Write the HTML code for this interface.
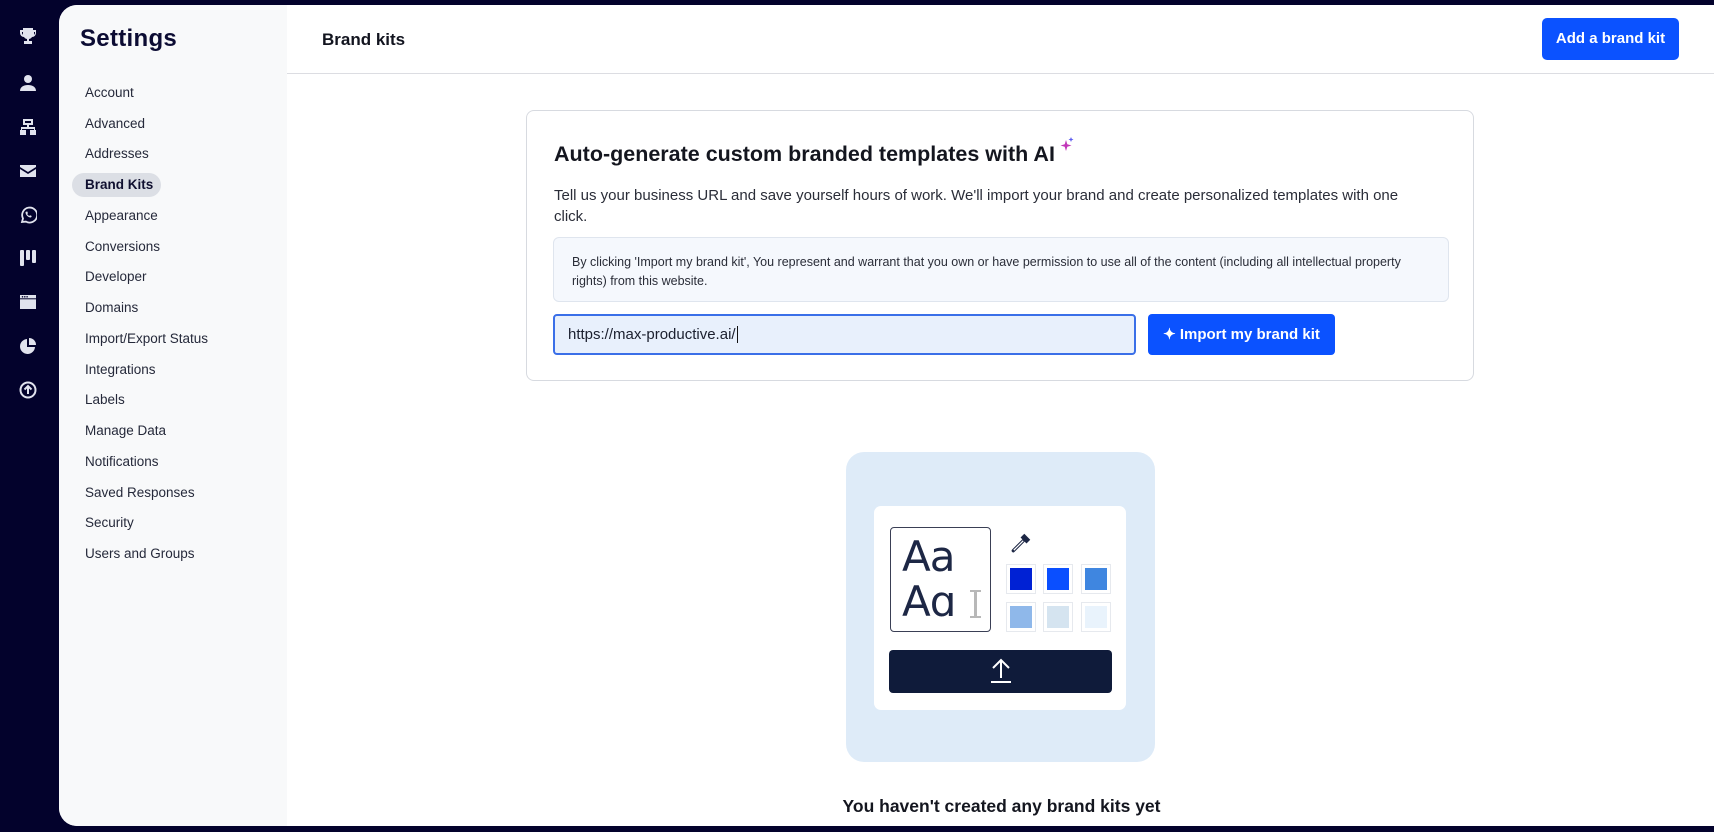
<!DOCTYPE html>
<html><head><meta charset="utf-8"><style>
*{box-sizing:border-box;margin:0;padding:0}
body{width:1714px;height:832px;background:#03022c;font-family:"Liberation Sans",sans-serif;position:relative;overflow:hidden;color:#1b1f2e}
.ic{position:absolute;left:19px;width:18px;height:18px}
.panel{position:absolute;left:59px;top:5px;width:1655px;height:821px;background:#fff;border-radius:18px 0 0 18px;overflow:hidden}
.side{position:absolute;left:0;top:0;width:228px;height:100%;background:#f8f9fa}
.side h1{position:absolute;left:21px;top:20px;font-size:24px;font-weight:bold;color:#0c0c33;letter-spacing:.3px}
.side .it{position:absolute;left:26px;font-size:13.5px;color:#25293a}
.pill{position:absolute;left:13px;top:168px;width:89px;height:24px;border-radius:12px;background:#dcdfe5}
.hdr{position:absolute;left:228px;top:0;right:0;height:69px;border-bottom:1px solid #dcdde2}
.abs{position:absolute}
.sw{position:absolute;width:30px;height:30px;border:1px solid #e6e9ee;padding:3px;background:#fff}
.sw div{width:100%;height:100%}
</style></head><body>
<svg class="ic" style="top:27px" viewBox="0 0 18 18" fill="#e1e3ee"><path d="M4 1h10v2h3v3a4 4 0 0 1-4 4 4 4 0 0 1-3 2v2h3v3H5v-3h3v-2a4 4 0 0 1-3-2 4 4 0 0 1-4-4V3h3zM3 5v1a2 2 0 0 0 1 1.7V5zm12 0v2.7A2 2 0 0 0 16 6V5z"/></svg>
<svg class="ic" style="top:74px" viewBox="0 0 18 18" fill="#e1e3ee"><circle cx="9" cy="5" r="4"/><path d="M1 17c0-4 3.5-6 8-6s8 2 8 6z"/></svg>
<svg class="ic" style="top:118px" viewBox="0 0 18 18" fill="#e1e3ee"><path d="M4 1h10v6H10v2h6v3h1v5h-6v-5h4v-1H3v1h4v5H1v-5h1V9h6V7H4zm2 2v2h6V3z"/></svg>
<svg class="ic" style="top:162px" viewBox="0 0 18 18" fill="#e1e3ee"><path d="M1 3h16v2L9 10 1 5zM1 7l8 5 8-5v8H1z"/></svg>
<svg class="ic" style="top:206px" viewBox="0 0 18 18" fill="none" stroke="#e1e3ee" stroke-width="1.8"><path d="M3 16l1-3.5A7.5 7.5 0 1 1 7 15.6z"/><path d="M6.5 6c0 3 2.5 5.5 5.5 5.5l.8-1.5-1.8-.8-.8.8a4 4 0 0 1-2-2l.8-.8-.8-1.8z" fill="#e1e3ee" stroke="none"/></svg>
<svg class="ic" style="top:249px" viewBox="0 0 18 18" fill="#e1e3ee"><rect x="1" y="1" width="4" height="16" rx="1"/><rect x="7" y="1" width="4" height="10" rx="1"/><rect x="13" y="1" width="4" height="13" rx="1"/></svg>
<svg class="ic" style="top:293px" viewBox="0 0 18 18" fill="#e1e3ee"><rect x="1" y="2" width="16" height="14"/><circle cx="3.5" cy="3.8" r=".8" fill="#03022c"/><circle cx="5.8" cy="3.8" r=".8" fill="#03022c"/><circle cx="8.1" cy="3.8" r=".8" fill="#03022c"/><rect x="1" y="5.3" width="16" height="1" fill="#03022c"/></svg>
<svg class="ic" style="top:337px" viewBox="0 0 18 18" fill="#e1e3ee"><path d="M8 2a7.5 7.5 0 1 0 8 8H8z"/><path d="M10 1v7h7a7 7 0 0 0-7-7z"/></svg>
<svg class="ic" style="top:381px" viewBox="0 0 18 18" fill="none" stroke="#e1e3ee" stroke-width="2"><circle cx="9" cy="9" r="7.5"/><path d="M9 13V5M5.5 8.5L9 5l3.5 3.5"/></svg>

<div class="panel">
 <div class="side">
  <h1>Settings</h1>
  <div class="pill"></div>
  <div class="it" style="top:80px">Account</div>
  <div class="it" style="top:111px">Advanced</div>
  <div class="it" style="top:141px">Addresses</div>
  <div class="it" style="top:172px;font-weight:bold;color:#101030">Brand Kits</div>
  <div class="it" style="top:203px">Appearance</div>
  <div class="it" style="top:234px">Conversions</div>
  <div class="it" style="top:264px">Developer</div>
  <div class="it" style="top:295px">Domains</div>
  <div class="it" style="top:326px">Import/Export Status</div>
  <div class="it" style="top:357px">Integrations</div>
  <div class="it" style="top:387px">Labels</div>
  <div class="it" style="top:418px">Manage Data</div>
  <div class="it" style="top:449px">Notifications</div>
  <div class="it" style="top:480px">Saved Responses</div>
  <div class="it" style="top:510px">Security</div>
  <div class="it" style="top:541px">Users and Groups</div>
 </div>
 <div class="hdr">
  <div class="abs" style="left:35px;top:25px;font-size:17px;font-weight:bold;color:#12141f">Brand kits</div>
  <div class="abs" style="left:1255px;top:13px;width:137px;height:42px;background:#0b52ff;border-radius:5px;color:#fff;font-weight:bold;font-size:15px;text-align:center;line-height:42px">Add a brand kit</div>
 </div>
 <div class="abs" style="left:467px;top:105px;width:948px;height:271px;border:1px solid #d7dae0;border-radius:8px">
  <div class="abs" style="left:27px;top:31px;font-size:21.5px;font-weight:bold;color:#14161f">Auto-generate custom branded templates with AI</div>
  <svg class="abs" style="left:533px;top:26px" width="14" height="16" viewBox="0 0 14 16"><path d="M6 3 7.3 7.2 11.5 8.5 7.3 9.8 6 14 4.7 9.8.5 8.5 4.7 7.2z" fill="#c237b8"/><path d="M11 0l.7 1.8L13.5 2.5l-1.8.7L11 5l-.7-1.8L8.5 2.5l1.8-.7z" fill="#5b5bf0"/></svg>
  <div class="abs" style="left:27px;top:74px;width:860px;font-size:15px;line-height:21px;color:#2a2d38">Tell us your business URL and save yourself hours of work. We'll import your brand and create personalized templates with one click.</div>
  <div class="abs" style="left:26px;top:126px;width:896px;height:65px;background:#f5f8fd;border:1px solid #dfe5ee;border-radius:6px;padding:15px 18px 0;font-size:12.5px;line-height:19px;color:#2a2d38">By clicking 'Import my brand kit', You represent and warrant that you own or have permission to use all of the content (including all intellectual property rights) from this website.</div>
  <div class="abs" style="left:26px;top:203px;width:583px;height:41px;background:#e8f0fc;border:2px solid #3a6fe8;border-radius:4px;padding-left:13px;line-height:37px;font-size:15px;color:#1b1f2e">https://max-productive.ai/<span style="border-left:1px solid #111;margin-left:1px"></span></div>
  <div class="abs" style="left:621px;top:203px;width:187px;height:41px;background:#0b52ff;border-radius:4px;color:#fff;font-weight:bold;font-size:15px;line-height:41px;text-align:center">✦ Import my brand kit</div>
 </div>
 <div class="abs" style="left:787px;top:447px;width:309px;height:310px;background:#deebf8;border-radius:18px">
  <div class="abs" style="left:28px;top:54px;width:252px;height:204px;background:#fff;border-radius:7px"></div>
  <div class="abs" style="left:44px;top:75px;width:101px;height:105px;border:1.5px solid #3a3f55;border-radius:4px;background:#fff"></div>
  <div class="abs" style="left:56px;top:82px;font-size:42px;line-height:45px;color:#1d2745;font-family:'DejaVu Sans',sans-serif;letter-spacing:-1px">Aa<br>Aɑ</div>
  <div class="abs" style="left:128px;top:138px;width:3px;height:28px;background:#b8b8b8"></div>
  <div class="abs" style="left:124px;top:138px;width:11px;height:2px;background:#b8b8b8"></div>
  <div class="abs" style="left:124px;top:164px;width:11px;height:2px;background:#b8b8b8"></div>
  <svg class="abs" style="left:164px;top:80px" width="22" height="22" viewBox="0 0 20 20"><path d="M3 17l9-9" stroke="#1d2745" stroke-width="3" stroke-linecap="round"/><path d="M3.5 16.5l8.5-8.5" stroke="#fff" stroke-width="1.2"/><path d="M11 5l4 4M13 3l4 4-2 2-4-4z" stroke="#1d2745" stroke-width="2" fill="#1d2745"/></svg>
  <div class="sw" style="left:160px;top:112px"><div style="background:#0021d4"></div></div>
  <div class="sw" style="left:197px;top:112px"><div style="background:#0a4fff"></div></div>
  <div class="sw" style="left:235px;top:112px"><div style="background:#3f86e0"></div></div>
  <div class="sw" style="left:160px;top:150px"><div style="background:#8fb8ea"></div></div>
  <div class="sw" style="left:197px;top:150px"><div style="background:#d5e4f0"></div></div>
  <div class="sw" style="left:235px;top:150px"><div style="background:#e9f3fc"></div></div>
  <div class="abs" style="left:43px;top:198px;width:223px;height:43px;background:#0f1b3a;border-radius:4px"></div>
  <svg class="abs" style="left:143px;top:205px" width="24" height="28" viewBox="0 0 24 28" fill="none" stroke="#fff" stroke-width="2"><path d="M12 21V4M4 11l8-8 8 8M2 25h20"/></svg>
 </div>
 <div class="abs" style="left:228px;width:1427px;top:791px;text-align:center;font-size:17.5px;font-weight:bold;color:#14161f"><span style="position:relative;left:1px">You haven't created any brand kits yet</span></div>
</div>
</body></html>
